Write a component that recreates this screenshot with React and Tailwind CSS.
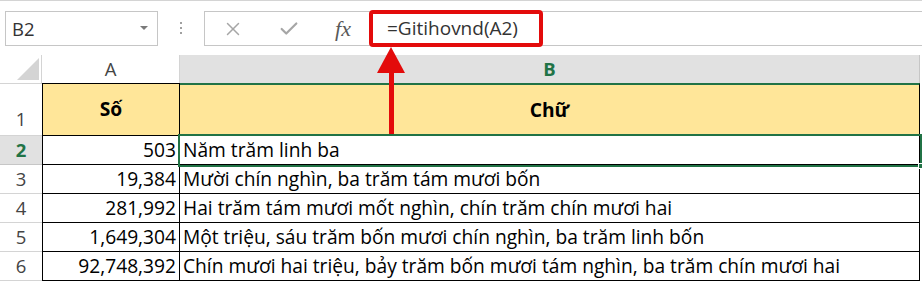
import { X, Check } from 'lucide-react';

const rows = [
  { n: '2', num: '503', text: 'Năm trăm linh ba', selected: true },
  { n: '3', num: '19,384', text: 'Mười chín nghìn, ba trăm tám mươi bốn' },
  { n: '4', num: '281,992', text: 'Hai trăm tám mươi mốt nghìn, chín trăm chín mươi hai' },
  { n: '5', num: '1,649,304', text: 'Một triệu, sáu trăm bốn mươi chín nghìn, ba trăm linh bốn' },
  { n: '6', num: '92,748,392', text: 'Chín mươi hai triệu, bảy trăm bốn mươi tám nghìn, ba trăm chín mươi hai' },
];

function FormulaBar() {
  return (
    <div className="flex h-[55px] items-start border-t border-[#d4d4d4] pt-[10px]">
      <div className="ml-[5px] flex h-[35px] w-[153px] items-center justify-between border border-[#c6c6c6] pl-[6px] pr-[9px] text-[18.5px] text-[#333]">
        <span>B2</span>
        <svg width="8" height="5" viewBox="0 0 8 5">
          <path d="M0 0 H8 L4 4 Z" fill="#7a7a7a" />
        </svg>
      </div>
      <div className="ml-[22px] mt-[11px] flex w-[2px] flex-col gap-[3px]">
        <div className="h-[2px] w-[2px] bg-[#a0a0a0]" />
        <div className="h-[2px] w-[2px] bg-[#a0a0a0]" />
        <div className="h-[2px] w-[2px] bg-[#a0a0a0]" />
      </div>
      <div className="ml-[22px] flex h-[35px] flex-1 items-center border border-r-0 border-[#c6c6c6]">
        <div className="flex w-[56px] justify-center">
          <X size={22} strokeWidth={1.6} color="#a6a6a6" />
        </div>
        <div className="flex w-[56px] justify-center">
          <Check size={22} strokeWidth={2.4} color="#a6a6a6" />
        </div>
        <div className="flex w-[52px] justify-center font-['Liberation_Serif',serif] text-[22px] italic text-[#595959]">
          fx
        </div>
        <div className="-mt-[2px] flex h-[37px] w-[174px] items-center self-start rounded-[4px] border-4 border-[#e30b0b] pl-[14px] text-[19px] text-[#333]">
          =Gitihovnd(A2)
        </div>
      </div>
    </div>
  );
}

export default function App() {
  return (
    <div className="relative h-[283px] w-[922px] overflow-hidden bg-white font-['Open_Sans',sans-serif] text-black">
      <FormulaBar />

      {/* column headers */}
      <div className="flex h-[28px] text-[18.5px]">
        <div className="flex w-[42px] items-end justify-end border-r border-[#d4d4d4] pb-[3px] pr-[2px]">
          <svg width="22" height="22" viewBox="0 0 22 22">
            <path d="M0 22 L22 0 V22 Z" fill="#d4d4d4" />
          </svg>
        </div>
        <div className="flex w-[138px] items-center justify-center border-r border-[#d4d4d4] text-[#444]">A</div>
        <div className="flex w-[740px] items-center justify-center border-r border-[#c6c6c6] bg-[#e1e1e1] font-bold text-[#217346]">
          B
        </div>
      </div>

      {/* row 1 */}
      <div className="flex h-[53px] text-[19.2px]">
        <div className="flex w-[42px] items-end justify-center border-b border-t border-[#d4d4d4] pb-[2px] text-[18.5px] text-[#444]">1</div>
        <div className="flex w-[138px] items-center justify-center border-b border-l border-r border-t border-black bg-[#ffe699] font-bold">
          Số
        </div>
        <div className="flex w-[740px] items-center justify-center border-b border-r border-t-2 border-black border-t-[#217346] bg-[#ffe699] font-bold">
          Chữ
        </div>
      </div>

      {rows.map((r) => (
        <div key={r.n} className="flex h-[29px] text-[19.2px]">
          <div
            className={
              r.selected
                ? 'flex w-[42px] items-center justify-center border-b border-[#c6c6c6] bg-[#e1e1e1] text-[18.5px] font-bold text-[#217346]'
                : 'flex w-[42px] items-center justify-center border-b border-[#d4d4d4] text-[18.5px] text-[#444]'
            }
          >
            {r.n}
          </div>
          <div className="flex w-[138px] items-center justify-end border-b border-l border-r border-black pr-[3px] leading-none">
            {r.num}
          </div>
          <div
            className={
              r.selected
                ? 'relative z-10 flex w-[740px] items-center border-b border-r border-black pl-[3px] leading-none outline-2 outline-[#217346]'
                : 'flex w-[740px] items-center border-b border-r border-black pl-[3px] leading-none'
            }
          >
            {r.text}
            {r.selected && (
              <div className="absolute -bottom-[5px] -right-[5px] h-[6px] w-[6px] border border-white bg-[#217346]" />
            )}
          </div>
        </div>
      ))}

      {/* annotation arrow */}
      <div className="absolute left-[377px] top-[47px] flex w-[28px] flex-col items-center">
        <svg width="28" height="26" viewBox="0 0 28 26">
          <path d="M14 0 L28 26 H0 Z" fill="#e30b0b" />
        </svg>
        <div className="h-[63px] w-[5px] bg-[#e30b0b]" />
      </div>
    </div>
  );
}
